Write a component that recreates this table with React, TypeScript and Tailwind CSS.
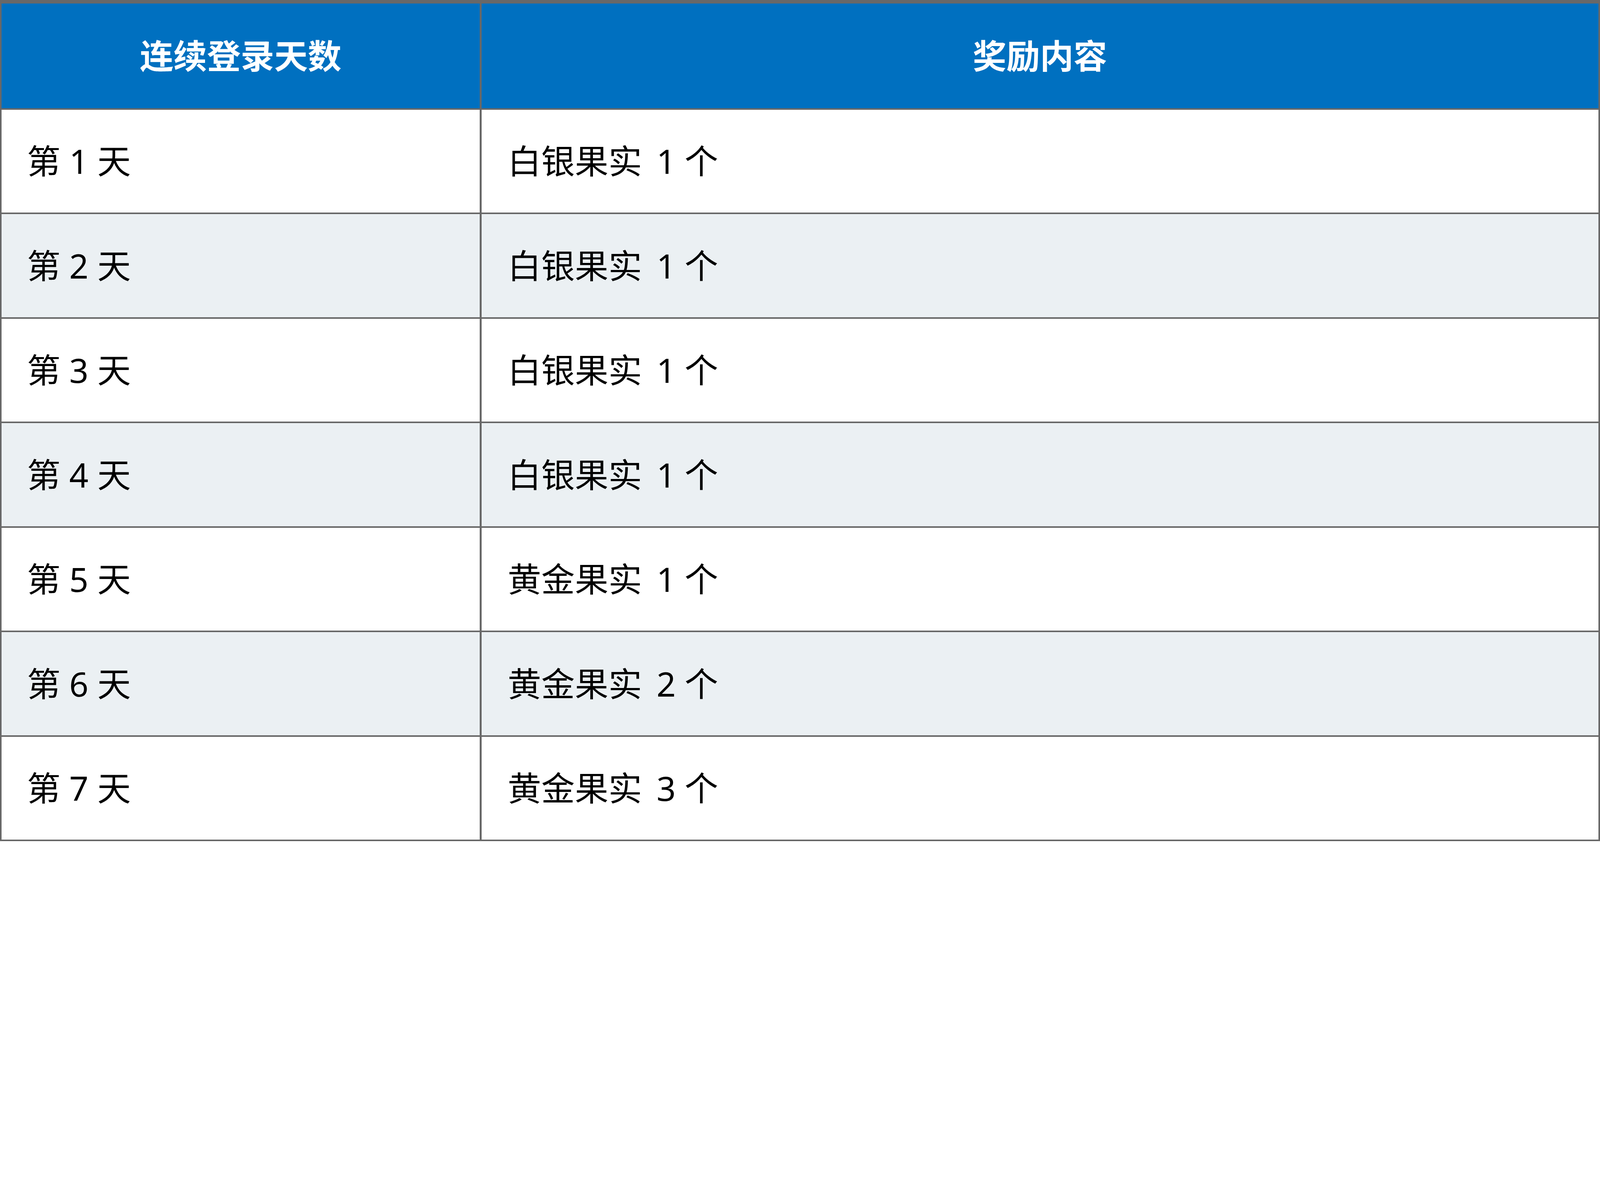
const ROWS: { day: number; item: string; count: number }[] = [
  { day: 1, item: "白银果实", count: 1 },
  { day: 2, item: "白银果实", count: 1 },
  { day: 3, item: "白银果实", count: 1 },
  { day: 4, item: "白银果实", count: 1 },
  { day: 5, item: "黄金果实", count: 1 },
  { day: 6, item: "黄金果实", count: 2 },
  { day: 7, item: "黄金果实", count: 3 },
];

export default function App() {
  return (
    <div className="bg-white font-['Noto_Sans','Noto_Sans_CJK_SC',sans-serif] text-[86px] leading-none">
      <div className="w-full border-x-[4.5px] border-t-[9px] border-b-[4.5px] border-[#686868]">
        {/* header */}
        <div className="flex h-[267.5px] bg-[#0070c0] font-bold text-white">
          <div className="flex w-[1224px] items-center justify-center">连续登录天数</div>
          <div className="w-[4.5px] bg-[#686868]" />
          <div className="flex flex-1 items-center justify-center">奖励内容</div>
        </div>

        {ROWS.map((r, i) => (
          <div
            key={r.day}
            className={
              i % 2 === 1
                ? "flex h-[267.5px] border-t-[4.5px] border-[#686868] bg-[#ebf0f3] text-black"
                : "flex h-[267.5px] border-t-[4.5px] border-[#686868] bg-white text-black"
            }
          >
            <div className="flex w-[1224px] items-center whitespace-pre pl-[65px]">{`第 ${r.day} 天`}</div>
            <div className="w-[4.5px] bg-[#686868]" />
            <div className="flex flex-1 items-center whitespace-pre pl-[67px]">
              {r.item}
              <span className="ml-[15px]">{` ${r.count} 个`}</span>
            </div>
          </div>
        ))}
      </div>
    </div>
  );
}
